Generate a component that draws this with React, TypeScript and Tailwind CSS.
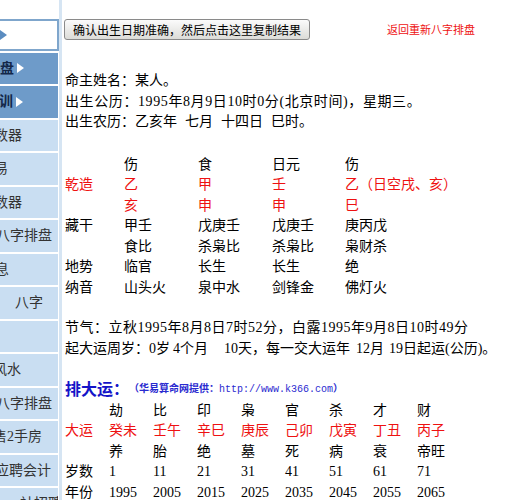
import React from "react";

type Item = { text: string; shift: number; kind: "box" | "dark" | "light" };

const menu: Item[] = [
  { text: "", shift: 0, kind: "box" },
  { text: "排盘", shift: -14, kind: "dark" },
  { text: "培训", shift: -15, kind: "dark" },
  { text: "数器", shift: -6, kind: "light" },
  { text: "易", shift: -6, kind: "light" },
  { text: "数器", shift: -6, kind: "light" },
  { text: "八字排盘", shift: -4, kind: "light" },
  { text: "息", shift: -5, kind: "light" },
  { text: "八字", shift: 15, kind: "light" },
  { text: "", shift: 0, kind: "light" },
  { text: "风水", shift: -7, kind: "light" },
  { text: "八字排盘", shift: -4, kind: "light" },
  { text: "售2手房", shift: -7, kind: "light" },
  { text: "应聘会计", shift: -5, kind: "light" },
  { text: "社招聘", shift: 20, kind: "light" },
];

const bazi: { label: string; red?: boolean; cells: string[] }[] = [
  { label: "", cells: ["伤", "食", "日元", "伤"] },
  { label: "乾造", red: true, cells: ["乙", "甲", "壬", "乙（日空戌、亥）"] },
  { label: "", red: true, cells: ["亥", "申", "申", "巳"] },
  { label: "藏干", cells: ["甲壬", "戊庚壬", "戊庚壬", "庚丙戊"] },
  { label: "", cells: ["食比", "杀枭比", "杀枭比", "枭财杀"] },
  { label: "地势", cells: ["临官", "长生", "长生", "绝"] },
  { label: "纳音", cells: ["山头火", "泉中水", "剑锋金", "佛灯火"] },
];

const dayun: { label: string; red?: boolean; cells: string[] }[] = [
  { label: "", cells: ["劫", "比", "印", "枭", "官", "杀", "才", "财"] },
  { label: "大运", red: true, cells: ["癸未", "壬午", "辛巳", "庚辰", "己卯", "戊寅", "丁丑", "丙子"] },
  { label: "", cells: ["养", "胎", "绝", "墓", "死", "病", "衰", "帝旺"] },
  { label: "岁数", cells: ["1", "11", "21", "31", "41", "51", "61", "71"] },
  { label: "年份", cells: ["1995", "2005", "2015", "2025", "2035", "2045", "2055", "2065"] },
];

function Triangle({ color }: { color: string }) {
  return (
    <svg width="7" height="10" viewBox="0 0 7 10" className="shrink-0">
      <path d="M0 0 L7 5 L0 10 Z" fill={color} />
    </svg>
  );
}

function Gap({ w }: { w: number }) {
  return <span className="inline-block" style={{ width: w }} />;
}

function Sidebar() {
  return (
    <div className="w-[62px] shrink-0 bg-white border-r-[3px] border-[#d6e5f3] pt-[19px] overflow-hidden">
      {menu.map((m, i) => {
        if (m.kind === "box") {
          return (
            <div
              key={i}
              className="w-[59px] h-[32px] mb-[1.5px] bg-white border-2 border-[#7fa6cc] border-l-0 flex items-center"
            >
              <Triangle color="#5b8cc0" />
            </div>
          );
        }
        const dark = m.kind === "dark";
        return (
          <div
            key={i}
            className={
              "w-[58px] h-[31.5px] mb-[2px] flex items-center overflow-hidden whitespace-nowrap text-[14px] " +
              (dark ? "bg-[#6e9bc9] text-[#14284a] font-bold" : "bg-[#c9def2] text-[#333]")
            }
          >
            <span style={{ marginLeft: m.shift }}>{m.text}</span>
            {dark && (
              <span className="ml-[3px] flex">
                <Triangle color="#ffffff" />
              </span>
            )}
          </div>
        );
      })}
    </div>
  );
}

export default function App() {
  return (
    <div className="flex w-[527px] h-[500px] overflow-hidden bg-white font-['Liberation_Serif','Noto_Sans_CJK_SC',serif] text-black">
      <Sidebar />
      <div className="flex-1 pl-[2px] pt-[19px] leading-[20.5px] text-[14px]">
        <div className="flex items-center">
          <button className="h-[21px] w-[246px] rounded-[3px] border border-[#8a8a8a] bg-gradient-to-b from-[#fbfbfb] to-[#dcdcd8] text-[12px] leading-none text-black font-['Noto_Sans_CJK_SC',sans-serif]">
            确认出生日期准确，然后点击这里复制结果
          </button>
          <span className="ml-[77px] text-[11px] text-[#ee1111] font-['Noto_Sans_CJK_SC',sans-serif]">
            返回重新八字排盘
          </span>
        </div>

        <div className="mt-[31px] pl-[1px] whitespace-nowrap">
          <div>命主姓名：某人。</div>
          <div className="tracking-[0.6px]">出生公历：1995年8月9日10时0分(北京时间)，星期三。</div>
          <div>
            出生农历：乙亥年<Gap w={8} />七月<Gap w={8} />十四日<Gap w={8} />巳时。
          </div>
        </div>

        <div className="mt-[22px] pl-[1px] grid grid-cols-[59px_74px_74px_73px_auto]">
          {bazi.map((r, ri) => (
            <React.Fragment key={ri}>
              <div className={r.red ? "text-[#ee1111]" : ""}>{r.label || "\u00a0"}</div>
              {r.cells.map((c, ci) => (
                <div
                  key={ci}
                  className={"whitespace-nowrap " + (ri === 1 || ri === 2 ? "text-[#ee1111]" : "")}
                >
                  {c}
                </div>
              ))}
            </React.Fragment>
          ))}
        </div>

        <div className="mt-[20px] pl-[1px] whitespace-nowrap">
          <div className="tracking-[0.5px]">节气：立秋1995年8月8日7时52分，白露1995年9月8日10时49分</div>
          <div>
            起大运周岁：0岁<Gap w={3} />4个月<Gap w={16} />10天，每一交大运年<Gap w={6} />12月<Gap w={5} />19日起运(公历)。
          </div>
        </div>

        <div className="mt-[19px] h-[20.5px] pl-[1px] flex items-center whitespace-nowrap">
          <span className="text-[16px] leading-none font-bold text-[#1414c8] font-['Noto_Sans_CJK_SC',sans-serif]">排大运：</span>
          <span className="mt-[2px] text-[10px] leading-none font-bold text-[#2a2ad0] font-['Noto_Sans_CJK_SC',sans-serif]">
            （华易算命网提供：<span className="font-['Liberation_Mono',monospace] font-normal">http://www.k366.com</span>）
          </span>
        </div>

        <div className="mt-[2px] pl-[1px] grid grid-cols-[44px_44px_44px_44px_44px_44px_44px_44px_44px]">
          {dayun.map((r, ri) => (
            <React.Fragment key={ri}>
              <div className={r.red ? "text-[#ee1111]" : ""}>{r.label || "\u00a0"}</div>
              {r.cells.map((c, ci) => (
                <div key={ci} className={"whitespace-nowrap " + (r.red ? "text-[#ee1111]" : "")}>
                  {c}
                </div>
              ))}
            </React.Fragment>
          ))}
        </div>
      </div>
    </div>
  );
}
